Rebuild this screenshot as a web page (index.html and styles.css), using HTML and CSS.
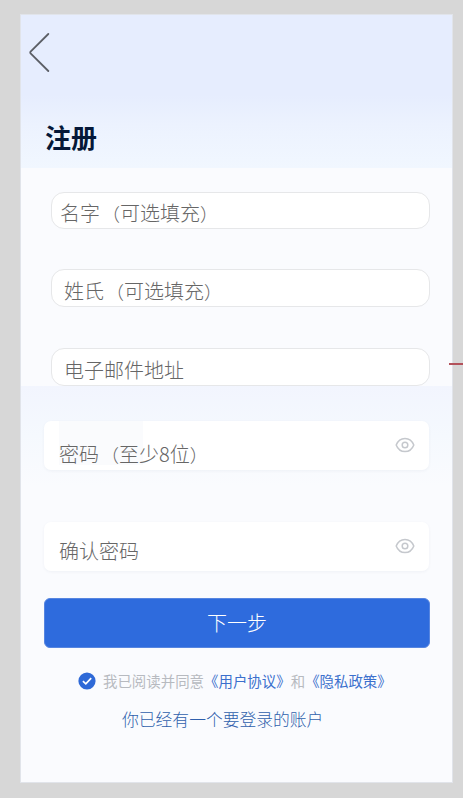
FILE: index.html
```html
<!doctype html>
<html lang="zh-CN">
<head>
	<meta charset="utf-8">
	<title>注册</title>
	<link rel="stylesheet" href="styles.css">
</head>
<body>
	<div class="phone">
		<div class="header">
			<a class="back">
				<svg width="22" height="42" viewBox="0 0 22 42"><path d="M19.3 2 L1.6 19.6 Q0.9 20.5 1.6 21.4 L19.3 39" /></svg>
			</a>
			<h1>注册</h1>
		</div>
		<form class="form">
			<label class="field first">名字<i class="paren open">（</i>可选填充<i class="paren">）</i></label>
			<label class="field second">姓氏<i class="paren open">（</i>可选填充<i class="paren">）</i></label>
			<label class="field email">电子邮件地址</label>
			<div class="lower">
				<label class="password top">
					<span class="fill"></span>
					<span class="hint">密码<i class="paren open">（</i>至少8位<i class="paren">）</i></span>
					<svg class="eye" width="20" height="16" viewBox="0 0 20 16"><path d="M1.2 8 C4.6 -0.8 15.4 -0.8 18.8 8 C15.4 16.8 4.6 16.8 1.2 8 Z" /><circle cx="10" cy="8" r="2.8" /></svg>
				</label>
				<label class="password confirm">
					<span class="hint">确认密码</span>
					<svg class="eye" width="20" height="16" viewBox="0 0 20 16"><path d="M1.2 8 C4.6 -0.8 15.4 -0.8 18.8 8 C15.4 16.8 4.6 16.8 1.2 8 Z" /><circle cx="10" cy="8" r="2.8" /></svg>
				</label>
				<button type="button" class="next">下一步</button>
				<div class="agree">
					<svg class="check" width="18" height="18" viewBox="0 0 18 18"><circle cx="9" cy="9" r="8.6" /><path d="M4.9 9.2 L7.8 11.9 L13.2 6.2" /></svg>
					<span>我已阅读并同意<a>《用户协议》</a>和<a>《隐私政策》</a></span>
				</div>
				<a class="login">你已经有一个要登录的账户</a>
			</div>
		</form>
		<i class="line"></i>
	</div>
</body>
</html>
```

FILE: styles.css
```css
*{
	margin:0;
	padding:0;
	box-sizing:border-box;
}
body{
	height:798px;
	padding:14px 0 0 20px;
	overflow:hidden;
	background-color:#d7d7d7;
	font-family:"Noto Sans CJK SC",sans-serif;
}
.phone{
	position:relative;
	width:433px;
	height:769px;
	border:1px solid #e1e4ea;
	background-color:#fafbfe;
}
.header{
	height:153px;
	padding:17px 0 0 8px;
	background:linear-gradient(#e6edfe 0,#e6edfe 80px,#ecf2fe 110px,#f1f7ff 100%);
}
.back{
	display:block;
	height:42px;
}
.back svg{
	display:block;
	fill:none;
	stroke:#5c5f66;
	stroke-width:1.8;
	stroke-linecap:round;
}
h1{
	margin:44px 0 0 16px;
	font-size:26px;
	line-height:38px;
	color:#051838;
}
.field{
	display:block;
	width:379px;
	height:37px;
	margin-left:30px;
	border:1px solid #e6e7e9;
	border-radius:13px;
	background-color:#fff;
	font-size:20px;
	font-weight:300;
	line-height:39px;
	white-space:nowrap;
	color:#666;
}
.paren{
	font-size:18px;
	font-style:normal;
	line-height:1;
}
.open{
	margin-left:2px;
}
.first{
	margin-top:24px;
	padding-left:8px;
}
.second{
	height:38px;
	margin-top:40px;
	padding-left:12px;
	line-height:41px;
}
.email{
	height:38px;
	margin-top:41px;
	padding-left:12px;
	line-height:41px;
}
/* 下半部分 */
.lower{
	display:flex;
	flex-direction:column;
	height:396px;
	padding:35px 0 0 23px;
	background:linear-gradient(#f2f5fe 0,#f5f9fe 50px,#fafbfe 100px);
}
.password{
	position:relative;
	display:flex;
	align-items:center;
	justify-content:space-between;
	width:385px;
	height:49px;
	padding:0 14px 0 15px;
	border-radius:7px;
	background-color:#fff;
	box-shadow:0 1px 3px rgba(60,80,120,.06);
	font-size:20px;
	font-weight:300;
	color:#666;
}
.hint{
	position:relative;
	line-height:30px;
}
.top .hint{
	padding-top:16px;
}
.confirm .hint{
	padding-top:8px;
}
.fill{
	position:absolute;
	left:15px;
	top:0;
	width:84px;
	height:44px;
	background-color:#fafbfd;
}
.eye{
	margin-bottom:1px;
	fill:none;
	stroke:#c5c8cd;
	stroke-width:1.5;
}
.confirm{
	margin-top:52px;
}
.next{
	width:386px;
	height:50px;
	margin-top:27px;
	padding-bottom:2px;
	border:1px solid #5685e0;
	border-radius:6px;
	background-color:#2e6bdd;
	font-family:inherit;
	font-size:20px;
	font-weight:300;
	color:#fff;
}
.agree{
	display:flex;
	align-items:center;
	gap:7px;
	height:22px;
	margin:22px 0 0 34px;
	font-size:14.45px;
	white-space:nowrap;
	color:#b7bac0;
}
.agree span{
	padding-bottom:2px;
}
.agree a{
	color:#3b70cd;
}
.check{
	fill:#2e69d7;
}
.check path{
	fill:none;
	stroke:#fff;
	stroke-width:1.7;
}
.login{
	margin:15px 0 0 78px;
	font-size:16.8px;
	font-weight:300;
	line-height:24px;
	color:#2f5fac;
}
.line{
	position:absolute;
	left:428px;
	top:348px;
	width:15px;
	height:2px;
	background-color:#b3525b;
}
```
